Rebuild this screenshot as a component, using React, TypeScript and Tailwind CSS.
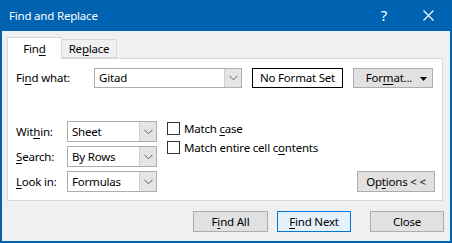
import React from "react";

const Chevron = () => (
  <svg width="9" height="6" viewBox="0 0 9 6" className="block">
    <path d="M0.5 0.8 L4.5 4.8 L8.5 0.8" fill="none" stroke="#606060" strokeWidth="1" />
  </svg>
);

function Select({ value, width }: { value: string; width: string }) {
  return (
    <div className={`flex h-[21px] ${width} border border-[#adadad] bg-white`}>
      <div className="flex-1 pl-[4px] flex items-center text-[#000]">{value}</div>
      <div className="w-[17px] flex items-center justify-center bg-[#e5e5e5] border-l border-[#cfcfcf]">
        <Chevron />
      </div>
    </div>
  );
}

function Btn({
  children,
  className = "",
  primary = false,
}: {
  children: React.ReactNode;
  className?: string;
  primary?: boolean;
}) {
  return (
    <div
      className={`flex items-center justify-center border ${
        primary ? "border-[#0078d7] bg-[#e5f1fb]" : "border-[#adadad] bg-[#e1e1e1]"
      } ${className}`}
    >
      {children}
    </div>
  );
}

const U = ({ children }: { children: React.ReactNode }) => (
  <span className="underline underline-offset-[2px] decoration-[1px]">{children}</span>
);

export default function App() {
  return (
    <div className="w-[452px] h-[243px] bg-[#0063b1] flex flex-col font-['Noto_Sans',sans-serif] text-[11.5px] tracking-[-0.2px] leading-none text-[#000]">
      {/* title bar */}
      <div className="h-[31px] flex items-center pl-[9px] text-white text-[11.5px]">
        <span className="flex-1">Find and Replace</span>
        <span className="w-[14px] text-[15px] mr-[32px] text-center">?</span>
        <svg width="11" height="11" viewBox="0 0 11 11" className="mr-[18px]">
          <path d="M0.5 0.5 L10.5 10.5 M10.5 0.5 L0.5 10.5" stroke="white" strokeWidth="1.1" />
        </svg>
      </div>

      {/* body */}
      <div className="flex-1 mx-[2px] mb-[2px] bg-[#f0f0f0] flex flex-col px-[5px] pt-[7px]">
        {/* tabs */}
        <div className="flex items-end h-[21px] relative z-10">
          <div className="w-[55px] h-[22px] bg-white border border-[#d9d9d9] border-b-0 flex items-center justify-center pt-[1px]">
            Fin<U>d</U>
          </div>
          <div className="w-[55px] h-[19px] mb-[1px] bg-[#f0f0f0] border border-[#d9d9d9] border-l-0 flex items-center justify-center">
            Re<U>p</U>lace
          </div>
        </div>

        {/* panel */}
        <div className="w-[436px] h-[143px] -mt-[1px] bg-white border border-[#d9d9d9] flex flex-col pl-[8px] pt-[9px]">
          <div className="flex items-center h-[20px]">
            <div className="w-[78px]">
              Fi<U>n</U>d what:
            </div>
            <div className="flex h-[20px] w-[148px] border border-[#adadad] bg-white">
              <div className="flex-1 pl-[4px] flex items-center">Gitad</div>
              <div className="w-[17px] flex items-center justify-center bg-[#e5e5e5] border-l border-[#cfcfcf]">
                <Chevron />
              </div>
            </div>
            <div className="ml-[10px] w-[91px] h-[20px] border border-black flex items-center justify-center">
              No Format Set
            </div>
            <Btn className="ml-[10px] w-[80px] h-[20px] relative">
              <span className="mr-[8px]">
                For<U>m</U>at...
              </span>
              <svg width="7" height="4" viewBox="0 0 7 4" className="absolute right-[5px] top-[8px]">
                <path d="M0 0 L7 0 L3.5 4 Z" fill="#000" />
              </svg>
            </Btn>
          </div>

          <div className="flex mt-[33px]">
            <div className="flex flex-col gap-[4px]">
              <div className="flex items-center">
                <div className="w-[51px]">
                  Wit<U>h</U>in:
                </div>
                <Select value="Sheet" width="w-[90px]" />
              </div>
              <div className="flex items-center">
                <div className="w-[51px]">
                  <U>S</U>earch:
                </div>
                <Select value="By Rows" width="w-[90px]" />
              </div>
              <div className="flex items-center">
                <div className="w-[51px]">
                  <U>L</U>ook in:
                </div>
                <Select value="Formulas" width="w-[90px]" />
              </div>
            </div>

            <div className="flex flex-col gap-[6px] ml-[10px] pt-[1px]">
              <div className="flex items-center">
                <div className="w-[13px] h-[13px] border border-[#333] bg-white" />
                <span className="ml-[4px]">
                  Match <U>c</U>ase
                </span>
              </div>
              <div className="flex items-center">
                <div className="w-[13px] h-[13px] border border-[#333] bg-white" />
                <span className="ml-[4px]">
                  Match entire cell c<U>o</U>ntents
                </span>
              </div>
            </div>

            <div className="flex-1 flex items-end justify-end pr-[7px]">
              <Btn className="w-[78px] h-[21px]">
                Op<U>t</U>ions &lt; &lt;
              </Btn>
            </div>
          </div>
        </div>

        {/* bottom buttons */}
        <div className="flex justify-end mt-[10px] pr-[1px]">
          <Btn className="w-[75px] h-[21px]">
            F<U>i</U>nd All
          </Btn>
          <Btn primary className="w-[74px] h-[21px] ml-[9px]">
            <U>F</U>ind Next
          </Btn>
          <Btn className="w-[74px] h-[21px] ml-[19px]">Close</Btn>
        </div>
      </div>
    </div>
  );
}
